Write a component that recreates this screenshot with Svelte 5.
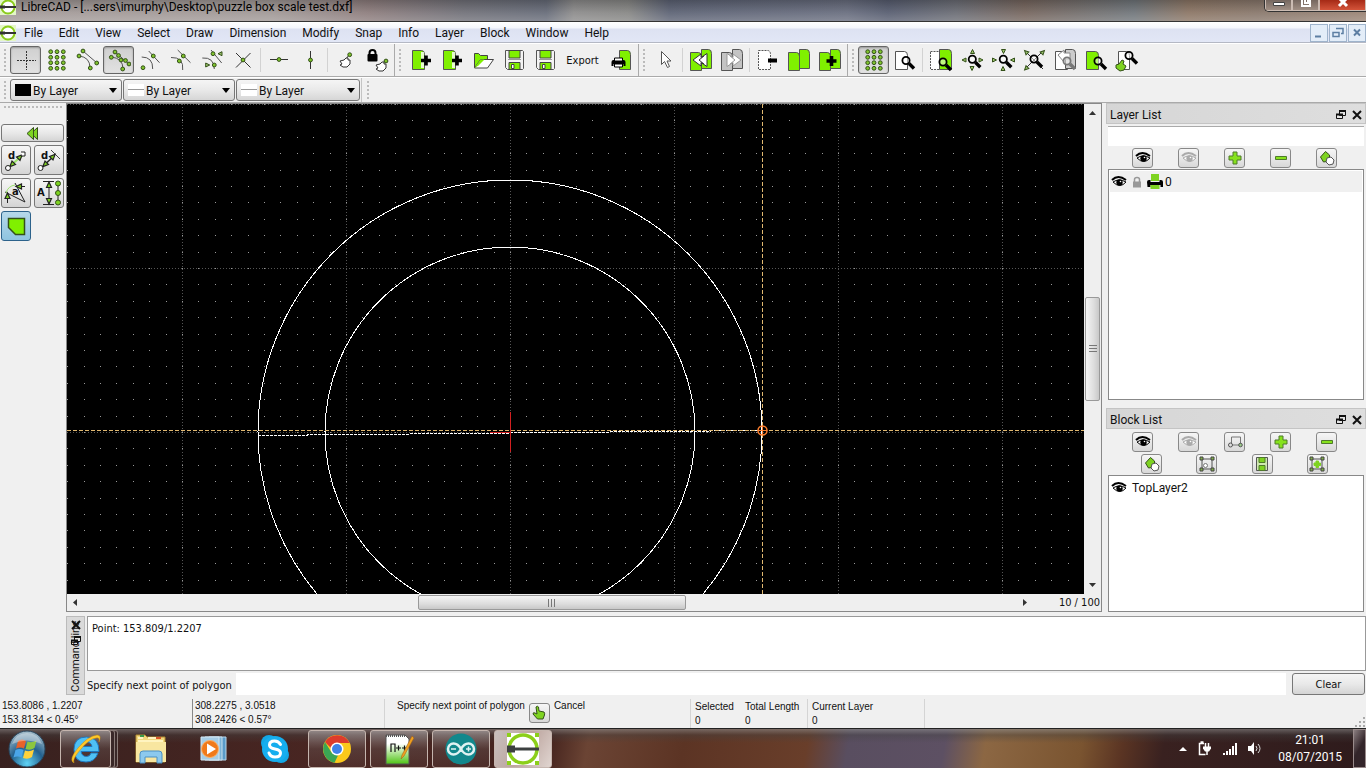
<script>
  const G = "#7ed321";
  const E = "#34501a";

  const node = (x, y) =>
    `<circle cx="${x}" cy="${y}" r="1.9" fill="#7fc42c" stroke="${E}" stroke-width="1"/>`;
  const line = (d, color = "#555", extra = "") =>
    `<path d="${d}" fill="none" stroke="${color}" ${extra}/>`;
  const tri = (x, y, turn) =>
    `<path d="M-2 2L0 -2L2 2Z" transform="translate(${x} ${y}) rotate(${turn})" fill="#9bc46a" stroke="${E}" stroke-width="1"/>`;
  const arrow = (x, y, turn) =>
    `<path d="M-2.500 2.500L0 -3L2.500 2.500Z" transform="translate(${x} ${y}) rotate(${turn})" fill="${G}" stroke="#222" stroke-width="1.200"/>`;
  const page = (x, y, w, h, fill = "#80f000", extra = "") =>
    `<path d="M${x} ${y}h${w - 3}q3 0 3 4v${h - 4}h-${w}z" fill="${fill}" stroke="#555" stroke-width="1" ${extra}/>`;
  const lens = (x, y, c = "#000") =>
    `<path d="M${x + 3} ${y + 3}l5 5" stroke="${c}" stroke-width="3.4"/><circle cx="${x}" cy="${y}" r="3.6" fill="#fff" fill-opacity=".5" stroke="${c}" stroke-width="1.8"/>`;
  const plus = (x, y) =>
    `<path d="M${x - 5} ${y}h10M${x} ${y - 5}v10" stroke="#000" stroke-width="3.6"/>`;
  const hand = (x, y, fill = "#fff") =>
    `<path d="M-5 -1l4-1l2-2l2 0l0 2l2 0l0 4l-3 3h-4l-3-2l2-1z" transform="translate(${x} ${y})" fill="${fill}" stroke="#333" stroke-width="1"/>`;
  const disk = `<path d="M3.500 2.500h17l1 1v17l-1 1h-15l-2-2z" fill="#f4f4f4" stroke="#555"/><path d="M7 2.500h11v7.500h-11z" fill="#80f000" stroke="#444"/><path d="M7 14.500h11v7h-11z" fill="#80f000" stroke="#444"/><path d="M9.500 16.500h2.500v4h-2.500z" fill="#fff" stroke="#444"/><path d="M6 11.500h13" stroke="#999"/>`;
  const printer = (x, y) =>
    `<path d="M${x - 7} ${y - 1}q0-2 2-2h10q2 0 2 2v4h-2v-2h-10v2h-2z" fill="#000"/><path d="M${x - 4} ${y - 5}h8v3h-8zM${x - 4} ${y + 1}h8v3h-8z" fill="#fff" stroke="#000"/>`;
  const dots = [5.7, 12, 18.3]
    .flatMap((x) => [3.7, 9.3, 14.7, 20.3].map((y) => node(x, y)))
    .join("");
  const both = (a, b) => page(1.5, 4.5, 11, 18, a) + page(12.5, 1.5, 10, 19, b);
  const eye = (c) =>
    `<path d="M1 6q6-6 14 0" fill="none" stroke="${c}" stroke-width="2"/><path d="M2 8q6-4 13 0q-6 7-13 0z" fill="#fff" stroke="${c}"/><circle cx="8.500" cy="8.500" r="3.200" fill="${c}"/><circle cx="9.500" cy="7.500" r=".8" fill="#fff"/>`;
  const frame = `<path d="M3 3h10v10h-10z" fill="none" stroke="#555"/><path d="M1 1h3v3h-3zM12 1h3v3h-3zM1 12h3v3h-3zM12 12h3v3h-3z" fill="#7fae45" stroke="#444"/>`;

  const icons = {
    free: line("M3 12.500h19M12.500 3v19", "#333", 'stroke-dasharray="2 1"'),
    grid: dots,
    endpoints: line("M7 3L21 15M3 8Q14 9 14 20") + node(7, 3) + node(3, 8) + node(20.7, 15) + node(14.3, 20),
    entity:
      line("M8 4L22 16M4 9Q16 10 16 21") +
      [[8, 4], [4.3, 9.3], [11.5, 7.5], [14, 12], [18.5, 12.5], [22, 16], [15.7, 21]].map((p) => node(...p)).join(""),
    center: line("M10.700 3L21.500 14.700M3.700 9Q15 9 14.700 21") + node(15.3, 8) + node(5, 19.7),
    middle: line("M8.700 2L21.500 14.700M2 9.500Q15 9 13.700 22") + node(14.3, 8) + node(10.3, 13),
    distance: line("M11 2L21.700 15M2.300 10Q14 9 14.300 21") + node(13, 5.7) + node(14.3, 17) + tri(20, 5.7, -90) + tri(7.7, 17, 90),
    intersect: line("M5 5L19.500 19.500M19.500 5L5 19.500", "#333") + node(12, 12),
    horizontal: line("M3 11.500h18", "#333") + node(12, 11.5),
    vertical: line("M12.500 3v18", "#333") + node(12.5, 12),
    relzero: line("M12 11l3-4", "#333") + hand(11, 14) + node(15.7, 6.7),
    lockzero: `<path d="M4.500 7v-2q0-3 3-3t3 3v2" fill="none" stroke="#000" stroke-width="2"/><rect x="2.500" y="6" width="10" height="7.500" rx="1"/>` + line("M17 16l3-3", "#333") + hand(16, 18) + node(21, 13),
    create: page(3.5, 2.5, 12, 19) + `<path d="M12 4h3v16h-3z" fill="#fff" opacity=".8"/>` + plus(17, 12.5),
    open: `<path d="M3.500 20v-14.500h4l2 2h7v4h-6z" fill="#80f000" stroke="#444"/><path d="M3.500 20l6-8.500h13l-6 8.500z" fill="#fff" stroke="#444"/><path d="M3.500 20l6-8.500h4l-6 6z" fill="#80f000" stroke="none"/>`,
    save: disk,
    print: page(10.5, 2.5, 11, 19) + printer(9.5, 15),
    select: `<path d="M8.500 3.500v13l3-3l3 6l2-1l-2.500-5.500h4z" fill="#fff" stroke="#555"/>`,
    undo: both("#80f000", "#80f000") + `<path d="M4 12l8-6v3.500l6-4v13l-6-4v3.500z" fill="#fff" stroke="#333"/><path d="M10 12l5-4M10 12l5 4" stroke="#333"/>`,
    redo: both("#c4c4c4", "#c4c4c4") + `<path d="M21 12l-8-6v3.500l-6-4v13l6-4v3.500z" fill="#fff" stroke="#999"/><path d="M15 12l-5-4M15 12l-5 4" stroke="#999"/>`,
    cut: page(2.5, 2.5, 12, 19, "#fff", 'stroke-dasharray="2 1"') + `<path d="M12 12.500h9" stroke="#000" stroke-width="4"/>`,
    copy: both("#80f000", "#80f000"),
    paste: both("#80f000", "#80f000") + plus(13.5, 13),
    preview: page(2.5, 3.5, 12, 18, "#fff") + lens(13, 12.5),
    redraw: page(1.5, 3.5, 11, 18, "#fff", 'stroke-dasharray="2 1"') + page(10.5, 1.5, 12, 20) + lens(14, 14),
    zoomin: tri(12.5, 3.5, 0) + tri(4, 12, -90) + tri(21, 12, 90) + tri(12, 20.5, 180) + lens(12.3, 11.3),
    zoomout: tri(12.5, 3.5, 180) + tri(3.5, 12, 90) + tri(21.5, 12, -90) + tri(12, 20.5, 0) + lens(12.3, 11.3),
    zoomauto: line("M3 3L21 21M21 3L3 21", "#333") + tri(4, 4, -45) + tri(21, 4, 45) + tri(4, 20.5, -135) + lens(12, 11),
    zoomprev: page(2.5, 3.5, 12, 18, "#fff") + page(12.5, 1.5, 10, 19, "#ccc") + `<path d="M5 7l6-5v3h6v6h-6v3z" fill="#fff" stroke="#888"/>` + lens(14, 13, "#777"),
    zoomwin: page(2.5, 3.5, 12, 18) + lens(14, 13),
    zoompan: page(3.5, 3.5, 11, 18, "#fff") + lens(14, 7.5) + `<path d="M1 17l3-1l3-4l2 1l-1 3l3 2l-2 4l-4 1l-4-3z" fill="${G}" stroke="${E}"/>`,

    back: `<path d="M12.500 1.500v12l-6.500-6z" fill="${G}" stroke="${E}"/><path d="M8.500 1.500v12l-6.500-6z" fill="${G}" stroke="${E}"/>`,
    dimpoint: line("M6 20L21 7", "#9be36a", 'stroke-width="2"') + arrow(9, 17.5, -135) + arrow(17, 10, 45) + `<circle cx="5" cy="21" r="2.500" fill="#fff" stroke="#222"/><path d="M18 5h4v4h-3" fill="#fff" stroke="#222"/>`,
    dimline: line("M5 21L18 9", "#222", 'stroke-width="1.500"') + line("M15 3L24 12", "#444") + arrow(9, 17.5, -135) + arrow(17, 9.5, 45) + `<circle cx="4.500" cy="21" r="2.500" fill="#fff" stroke="#222"/>`,
    dimangle: line("M2 12L22 22L12 3M4.500 23v-8M14 6.500h8", "#222") + line("M3 13Q5 6 12 5", "#9be36a") + arrow(4.5, 16, 0) + arrow(16, 6.5, -90),
    dimarea: line("M7 1.500h11M7 24.500h11M13 3v20M22 3v20", "#222") + arrow(13, 5, 0) + arrow(13, 21, 180) + `<g fill="${G}" stroke="${E}"><circle cx="22" cy="3.500" r="2.500"/><circle cx="22" cy="13" r="2.500"/><circle cx="22" cy="22.500" r="2.500"/></g>`,
    polygon: `<path d="M5.500 5.500h16v16h-9l-7-7z" fill="#80f000" stroke="${E}" stroke-width="1.500"/>`,

    eye: eye("#000"),
    eyeoff: eye("#aaa"),
    add: `<path d="M6 2h4v4h4v4h-4v4h-4v-4h-4v-4h4z" fill="#86e21c" stroke="#4f7a2a"/>`,
    remove: `<path d="M2.500 6.500h11v3h-11z" fill="#86e21c" stroke="#4f7a2a"/>`,
    edit: `<path d="M1.500 7l5-5.500l4 3.500v6l-6 1z" fill="${G}" stroke="${E}"/><path d="M8 8l4-1l3 3l-1 4l-4 1l-3-3z" fill="#fff" stroke="#555"/>`,
    attrs: `<path d="M4.500 10v-7h9v7M5 11h8" fill="none" stroke="#777"/><circle cx="3.500" cy="11" r="2" fill="#ddd" stroke="#555"/><circle cx="13.500" cy="11" r="1.800" fill="#9c8" stroke="#555"/>`,
    frame: frame + `<circle cx="6.500" cy="9.500" r="2" fill="#fff" stroke="#777"/>`,
    insert: frame + `<path d="M7 5h2.500v2h2v2.500h-2v2h-2.500v-2h-2v-2.500h2z" fill="${G}" stroke="${G}"/>`,
    smallsave: `<path d="M2.500 1.500h11v13h-11z" fill="#cfe8b0" stroke="#555"/><path d="M5 1.500h6v5h-6zM5 9.500h6v5h-6z" fill="${G}" stroke="#4f7a2a"/>`,
    lock: `<path d="M5.500 8v-2.500q0-2 2.500-2t2.500 2v2.500" fill="none" stroke="#999" stroke-width="1.500"/><path d="M4 7.500h8v6h-8z" fill="#999"/>`,
    printlayer: `<path d="M4 0h8v7h-8z" fill="${G}"/><path d="M0 8q0-2 2-2h1.500v2h9v-2h1.500q2 0 2 2v5h-2.500v-2h-10v2h-3z" fill="#000"/><path d="M3.500 11h9v4h-9z" fill="${G}"/>`,
    pointer: `<path d="M5 2q1.500-1.500 2.500 0l.5 4l5 1q1 1 .5 3l-1.500 4h-5.500l-4.500-5q0-2 2-1l2 1z" fill="${G}" stroke="${E}"/>`,
    float: `<path d="M6.500 4.500h6v4h-6zM3.500 7.500h6v4h-6z" fill="#e4e4e4" stroke="#111"/><path d="M6 4h7M3 7.500h7" stroke="#111" stroke-width="2"/>`,
    close: `<path d="M4 4l8 8M12 4l-8 8" stroke="#111" stroke-width="2"/>`,
    minimize: `<path d="M4 11.500h6" stroke="#5d7fa3" stroke-width="2"/>`,
    restore: `<path d="M6 3.500h7v5h-2M3 7.500h6v4h-6z" fill="none" stroke="#5d7fa3" stroke-width="1.500"/>`,
    closedoc: `<path d="M5 4.500l6 6M11 4.500l-6 6" stroke="#5d7fa3" stroke-width="2"/>`,
    app: `<path d="M0 0h16v16h-16z" fill="#e4f6c8"/><circle cx="8" cy="8" r="6.500" fill="#fff" stroke="#8bcb1c" stroke-width="2"/><path d="M0 8h16" stroke="#333" stroke-width="2"/><path d="M0 6.500h5v3h-5z" fill="#333"/>`,
  };

  const menus = ["File", "Edit", "View", "Select", "Draw", "Dimension", "Modify", "Snap", "Info", "Layer", "Block", "Window", "Help"];

  const toolbars = [
    ["free", "grid", "endpoints", "entity", "center", "middle", "distance", "intersect", "|", "horizontal", "vertical", "|", "relzero", "lockzero"],
    ["create", "create", "open", "save", "save", "Export", "print"],
    ["select", "|", "undo", "redo", "|", "cut", "copy", "paste"],
    ["grid", "preview", "|", "redraw", "zoomin", "zoomout", "zoomauto", "zoomprev", "zoomwin", "zoompan"],
  ];
  const pressed = ["0-free", "0-entity", "3-grid"];

  const blockTools = [
    ["eye", "eyeoff", "attrs", "add", "remove"],
    ["edit", "frame", "smallsave", "insert"],
  ];

  // drawing origin and grid pitch in view pixels
  const ox = 443;
  const oy = 328;
  const step = 16.4;

  let points = "";
  for (let i = -60; i <= 120; i++) {
    for (let j = -40; j <= 60; j++) {
      const x = Math.round(ox + i * step);
      const y = Math.round(oy + j * step);
      if (x >= 0 && y >= 0) points += `M${x} ${y}h1`;
    }
  }
  const metaX = Array.from({ length: 14 }, (_, i) => ox + (i - 2) * 164);
  const metaY = Array.from({ length: 8 }, (_, i) => oy + (i - 2) * 164);

  let filter = "";
  let command = "";
</script>

{#snippet icon(name, size)}
  <svg class="icon" width={size} height={size} viewBox="0 0 {size} {size}" aria-hidden="true">
    {@html icons[name]}
  </svg>
{/snippet}

<div class="desktop">
  <header class="titlebar">
    {@render icon("app", 16)}
    <h1>LibreCAD - [...sers\imurphy\Desktop\puzzle box scale test.dxf]</h1>
    <div class="window-buttons">
      <button aria-label="Minimize"><svg width="14" height="8"><path d="M1.500 2.500h11v3h-11z" fill="#fff" stroke="#444" /></svg></button>
      <button aria-label="Maximize"><svg width="14" height="8"><path d="M3 -3h8v9h-8zM6 0v3h3v-3" fill="none" stroke="#fff" stroke-width="2" /></svg></button>
      <button class="red" aria-label="Close"><svg width="14" height="8"><path d="M3 -2l8 8M11 -2l-8 8" stroke="#fff" stroke-width="3" /></svg></button>
    </div>
  </header>

  <nav class="menubar">
    {@render icon("app", 16)}
    {#each menus as menu}
      <button>{menu}</button>
    {/each}
    <div class="doc-buttons">
      {#each ["minimize", "restore", "closedoc"] as name}
        <button aria-label={name}>{@render icon(name, 16)}</button>
      {/each}
    </div>
  </nav>

  <div class="toolrow main-tools">
    {#each toolbars as tools, t}
      <div class="toolbar" role="toolbar">
        <span class="handle"></span>
        {#each tools as tool}
          {#if tool === "|"}
            <span class="separator"></span>
          {:else if tool === "Export"}
            <button class="text">Export</button>
          {:else}
            <button class:pressed={pressed.includes(`${t}-${tool}`)} aria-label={tool}>{@render icon(tool, 24)}</button>
          {/if}
        {/each}
      </div>
    {/each}
  </div>

  <div class="toolrow pens">
    <span class="handle"></span>
    {#each ["color", "width", "type"] as kind}
      <div class="pen {kind}">
        <span class="swatch"></span>
        <select aria-label="Pen {kind}"><option>By Layer</option></select>
        <svg width="8" height="5" aria-hidden="true"><path d="M0 0h8l-4 5z" /></svg>
      </div>
    {/each}
    <span class="edge"></span>
    <span class="handle"></span>
  </div>

  <div class="workspace">
    <aside class="cad-tools">
      <span class="grip"></span>
      <button class="wide" aria-label="Back">{@render icon("back", 15)}</button>
      <button aria-label="Distance point to point">{@render icon("dimpoint", 26)}<b>d</b></button>
      <button aria-label="Distance entity to point">{@render icon("dimline", 26)}<b>d</b></button>
      <button aria-label="Angle between lines">{@render icon("dimangle", 26)}<b class="angle">a</b></button>
      <button aria-label="Total length">{@render icon("dimarea", 26)}<b class="area">A</b></button>
      <button class="active" aria-label="Polygonal area">{@render icon("polygon", 26)}</button>
    </aside>

    <div class="docks">
      <div class="upper">
        <main class="view">
          <div class="canvas">
            <svg width="100%" height="100%" shape-rendering="crispEdges">
              <path d={points} transform="translate(0 .5)" stroke="#999" />
              {#each metaX as x}
                <line x1={x + 0.5} y1="0" x2={x + 0.5} y2="100%" stroke="#555" stroke-dasharray="1 2" />
              {/each}
              {#each metaY as y}
                <line x1="0" y1={y + 0.5} x2="100%" y2={y + 0.5} stroke="#555" stroke-dasharray="1 2" />
              {/each}
              <g fill="none" stroke="#fff">
                <circle cx={ox} cy={oy} r="252" />
                <circle cx={ox} cy={oy} r="185" />
                <path d="M191 331.500L695 326.500" stroke-dasharray="3 1" />
              </g>
              <path d="M423 328.500h21M443.500 308v40" stroke="#d22020" />
              <g stroke="#e0b870" stroke-dasharray="4 2">
                <line x1="0" y1="326.500" x2="4000" y2="326.500" />
                <line x1="695.500" y1="0" x2="695.500" y2="2000" />
              </g>
              <g fill="none" stroke="#ff8030" shape-rendering="auto">
                <circle cx="695.500" cy="326.500" r="4.500" stroke-width="1.500" />
                <path d="M691 326.500h9M695.500 322v9" />
              </g>
            </svg>
          </div>
          <div class="vbar">
            <svg width="7" height="4"><path d="M0 4h7l-3.500-4z" fill="#333" /></svg>
            <div class="thumb"><span></span></div>
            <svg width="7" height="4"><path d="M0 0h7l-3.500 4z" fill="#333" /></svg>
          </div>
          <div class="hbar">
            <svg width="4" height="7"><path d="M4 0v7l-4-3.500z" fill="#333" /></svg>
            <div class="thumb"><span></span></div>
            <svg width="4" height="7"><path d="M0 0v7l4-3.500z" fill="#333" /></svg>
            <span class="scale">10 / 100</span>
          </div>
        </main>

        <aside class="lists">
          <section class="layers">
            <h2>Layer List {@render icon("float", 16)}{@render icon("close", 16)}</h2>
            <input type="text" aria-label="Filter layers" bind:value={filter} />
            <div class="buttons">
              {#each ["eye", "eyeoff", "add", "remove", "edit"] as name}
                <button aria-label={name}>{@render icon(name, 16)}</button>
              {/each}
            </div>
            <ul>
              <li class="current">
                {@render icon("eye", 16)}{@render icon("lock", 16)}{@render icon("printlayer", 16)}<span>0</span>
              </li>
            </ul>
          </section>
          <section class="blocks">
            <h2>Block List {@render icon("float", 16)}{@render icon("close", 16)}</h2>
            {#each blockTools as row}
              <div class="buttons">
                {#each row as name}
                  <button aria-label={name}>{@render icon(name, 16)}</button>
                {/each}
              </div>
            {/each}
            <ul>
              <li>{@render icon("eye", 16)}<span class="name">TopLayer2</span></li>
            </ul>
          </section>
        </aside>
      </div>

      <section class="command">
        <div class="command-title">
          {@render icon("close", 16)}
          {@render icon("float", 16)}
          <h2>Command line</h2>
        </div>
        <div class="command-body">
          <textarea readonly aria-label="Command history">Point: 153.809/1.2207</textarea>
          <div class="prompt">
            <label for="command">Specify next point of polygon</label>
            <input id="command" type="text" bind:value={command} />
            <button>Clear</button>
          </div>
        </div>
      </section>
    </div>
  </div>

  <footer class="status">
    <div class="coords">153.8086 , 1.2207<br />153.8134 &lt; 0.45°</div>
    <div class="coords line">308.2275 , 3.0518<br />308.2426 &lt; 0.57°</div>
    <div class="mouse">
      <span>Specify next point of polygon</span>
      <button aria-label="Mouse hint">{@render icon("pointer", 16)}</button>
      <span>Cancel</span>
    </div>
    <div class="counts">
      <span>Selected<br />0</span>
      <span>Total Length<br />0</span>
    </div>
    <div class="layer">Current Layer<br />0</div>
    <svg class="corner" width="10" height="10"><path d="M8 1h2M8 5h2M8 9h2M4 5h2M4 9h2M0 9h2" stroke="#aaa" stroke-width="2" /></svg>
  </footer>

  <div class="taskbar">
    <button class="start" aria-label="Start">
      <svg width="38" height="38" viewBox="0 0 38 38">
        <defs>
          <radialGradient id="orb" cy=".9" r=".9">
            <stop offset="0" stop-color="#5fd3f5" />
            <stop offset=".5" stop-color="#23618f" />
            <stop offset="1" stop-color="#a9c0cc" />
          </radialGradient>
        </defs>
        <circle cx="19" cy="19" r="18" fill="url(#orb)" stroke="#27455c" />
        <path d="M10 11q4-3 8 0l-2 7.500q-4-2-8 0z" fill="#e8622a" />
        <path d="M19.500 11.500q4 2 9-1l-2 7.500q-4 3-9 1z" fill="#8cc63e" />
        <path d="M7.500 20q4-2 8 0l-2 7.500q-4-2-8 0z" fill="#4aa5e8" />
        <path d="M17 20.500q4 2 9-1l-2 7.500q-4 3-9 1z" fill="#ffd23a" />
        <path d="M4 14q4-11 15-11t15 11q-15-7-30 0z" fill="#fff" opacity=".35" />
      </svg>
    </button>
    <button class="task open stacked" aria-label="Internet Explorer">
      <svg width="32" height="32" viewBox="0 0 32 32">
        <path d="M28 20q-3 9-12 9q-12 0-12-12.500q0-12.500 12.500-12.500q12.500 0 12.500 14.500h-18q1 5 5.500 5q3.500 0 4.500-3.500zM11 13.500h11q-1-4.500-5.500-4.500t-5.500 4.500z" fill="#4fc1f4" stroke="#1e78c0" />
        <path d="M4 30q-6-3 4-15q10-12 19-13q5 0 2 7q1-5-3-4q-7 1-15 11q-9 10-7 14z" fill="#ffc928" stroke="#c98a10" stroke-width=".5" />
      </svg>
    </button>
    <button class="task" aria-label="Explorer">
      <svg width="34" height="32" viewBox="0 0 34 32">
        <path d="M2 29v-27h9l2 2h18v25z" fill="#f1d77c" stroke="#b08a30" />
        <path d="M4 8h25M4 5h5M14 5h12" stroke="#fff4c0" stroke-width="2" />
        <path d="M6 3h4" stroke="#3a9b4a" stroke-width="2" /><path d="M22 5h5" stroke="#d8562a" stroke-width="2" />
        <path d="M2 9h30v20h-30z" fill="#f8e6a0" />
        <path d="M6 30v-9q0-3 3-3h16q3 0 3 3v9h-5v-6h-12v6z" fill="#8cc9ee" stroke="#4b90c4" />
      </svg>
    </button>
    <button class="task" aria-label="Media Player">
      <svg width="28" height="28" viewBox="0 0 28 28">
        <path d="M10 2h17v23h-17z" fill="#5a9bc9" stroke="#b9d6ea" /><path d="M6 2h17v23h-17z" fill="#7db4d8" stroke="#c9e0ee" /><path d="M2 2h18v23h-18z" fill="#a5cde6" stroke="#d5e8f4" />
        <circle cx="11" cy="14" r="8.500" fill="#f07a1a" stroke="#fbb26a" /><path d="M8 8.500l9 5.500l-9 5.500z" fill="#fff" />
      </svg>
    </button>
    <button class="task" aria-label="Skype">
      <svg width="32" height="32" viewBox="0 0 32 32">
        <circle cx="10" cy="10" r="8" fill="#13a8e6" /><circle cx="22" cy="22" r="8" fill="#13a8e6" /><circle cx="16" cy="16" r="13" fill="#16aeee" />
        <path d="M21.500 11.500q-2-3.500-6-3.500q-5 0-5 4q0 3 5.500 4t5.500 4q0 4-5.500 4q-4.500 0-6-4" fill="none" stroke="#fff" stroke-width="3" stroke-linecap="round" />
      </svg>
    </button>
    <button class="task open" aria-label="Chrome">
      <svg width="30" height="30" viewBox="0 0 30 30">
        <circle cx="15" cy="15" r="14" fill="#fbc91b" />
        <path d="M3 8a14 14 0 0 1 24.500 1h-12.500l-6 5z" fill="#dd3b2c" />
        <path d="M3 8l6.500 10.500l6.500 3l-3.500 7.200a14 14 0 0 1-9.500-20.700z" fill="#3aa654" />
        <circle cx="15" cy="15" r="6.500" fill="#fff" /><circle cx="15" cy="15" r="5" fill="#3f82e8" />
      </svg>
    </button>
    <button class="task open" aria-label="Notepad++">
      <svg width="32" height="32" viewBox="0 0 32 32">
        <defs>
          <linearGradient id="note" x2="0" y2="1">
            <stop offset=".3" stop-color="#fff" />
            <stop offset="1" stop-color="#4fc414" />
          </linearGradient>
        </defs>
        <path d="M3 2h19l4 4v25h-23z" fill="url(#note)" stroke="#555" />
        <path d="M3 3h19" stroke="#555" stroke-width="2" stroke-dasharray="1 1" />
        <path d="M8 19v-8h4v8M13 15h5M15.500 12.500v5M19 15h5M21.500 12.500v5" fill="none" stroke="#111" stroke-width="1.200" />
        <path d="M29 3l-10 19l-1 4l3-3l10-18z" fill="#f0a020" stroke="#9a5b14" stroke-width=".5" />
      </svg>
    </button>
    <button class="task open" aria-label="Arduino">
      <svg width="32" height="32" viewBox="0 0 32 32">
        <circle cx="16" cy="16" r="15.500" fill="#12888c" />
        <path d="M16 16q-3-5.500-7.500-5.500a5.500 5.500 0 0 0 0 11q4.500 0 7.500-5.500q3-5.500 7.500-5.500a5.500 5.500 0 0 1 0 11q-4.500 0-7.500-5.500z" fill="none" stroke="#dff2f2" stroke-width="2.500" />
        <path d="M6 16h5M21 16h5M23.500 13.500v5" stroke="#dff2f2" stroke-width="1.500" />
      </svg>
    </button>
    <button class="task open current" aria-label="LibreCAD">
      <svg width="32" height="32" viewBox="0 0 32 32">
        <path d="M0 0h32v32h-32z" fill="#fff" />
        <path d="M0 0h4v4h-4zM28 0h4v4h-4zM0 28h4v4h-4zM28 28h4v4h-4z" fill="#8ccf1a" />
        <circle cx="16" cy="16" r="14" fill="none" stroke="#8ccf1a" stroke-width="3.500" />
        <path d="M0 16h32" stroke="#3c4040" stroke-width="3" /><path d="M0 12.500h8v7h-8z" fill="#3c4040" />
      </svg>
    </button>

    <div class="tray">
      <svg width="8" height="4"><path d="M0 4h8l-4-4z" fill="#fff" /></svg>
      <svg width="14" height="15"><path d="M6 2.500h-4.500v11h6M2.500 1h3" fill="none" stroke="#fff" stroke-width="1.500" /><path d="M5 5.500h8v2l-2 3h-4l-2-3z" fill="#fff" /><path d="M7.500 2v4M10.500 2v4M9 10v4" stroke="#fff" stroke-width="1.500" /></svg>
      <svg width="14" height="12"><path d="M1 12v-2M4 12v-4M7 12v-6M10 12v-9M13 12v-12" stroke="#fff" stroke-width="2" /></svg>
      <svg width="14" height="13"><path d="M0 4h3l3-4v13l-3-4h-3z" fill="#fff" /><path d="M8 4q2 2.500 0 5M10 2q4 4.500 0 9" fill="none" stroke="#ddd" /></svg>
      <time>21:01<br />08/07/2015</time>
      <button class="peek" aria-label="Show desktop"></button>
    </div>
  </div>
</div>

<style>
  :global(body) {
    margin: 0;
    overflow: hidden;
  }

  * {
    box-sizing: border-box;
  }

  button,
  input,
  select,
  textarea {
    font: inherit;
    color: inherit;
    margin: 0;
    padding: 0;
    border: 0;
    background: none;
  }

  h1,
  h2 {
    margin: 0;
    font-size: 12px;
    font-weight: normal;
  }

  svg {
    display: block;
    flex: none;
  }

  .desktop {
    display: flex;
    flex-direction: column;
    height: 100vh;
    background: #f0f0f0;
    color: #111;
    font: 12px/16px Roboto, "Open Sans", sans-serif;
  }

  .titlebar {
    display: flex;
    height: 22px;
    flex: none;
    border-bottom: 1px solid #333;
    background:
      linear-gradient(#0003, #fff1 60%, #fff3),
      linear-gradient(90deg, #a39a98 0, #a09896 20%, #8c7c7c 27%, #707078 34%, #666b78 40%, #8c8b8b 42%, #868684 46%, #5c6274 49%, #686d7e 62%, #575d70 65%, #6a6c74 70%, #75655d 75%, #6f757a 83%, #8b7564 87%, #88776b 92%, #9a8374 100%);
  }

  .titlebar .icon {
    margin-top: -1px;
  }

  .titlebar h1 {
    padding-left: 5px;
    line-height: 14px;
    color: #000;
  }

  .window-buttons {
    display: flex;
    height: 12px;
    margin-left: auto;
    border: 1px solid #333;
    border-width: 0 0 1px 1px;
    border-radius: 0 0 0 5px;
    overflow: hidden;
  }

  .window-buttons button {
    display: flex;
    justify-content: center;
    width: 27px;
    border: 1px solid #cbbcb3;
    border-top: 0;
    background: linear-gradient(#75675f, #a08f84);
  }

  .window-buttons .red {
    width: 47px;
    background: linear-gradient(#a52a16, #d4543a);
  }

  .menubar {
    display: flex;
    align-items: center;
    height: 21px;
    flex: none;
    gap: 16px;
    padding-top: 2px;
    border-bottom: 1px solid #b4b8c4;
    background: linear-gradient(#fff 0, #f4f6fc 30%, #dde2f2 35%, #e2e7f6 100%);
  }

  .menubar > .icon {
    margin-right: -8px;
  }

  .doc-buttons {
    display: flex;
    gap: 1px;
    margin-left: auto;
  }

  .doc-buttons button {
    width: 18px;
    height: 18px;
    border: 1px solid #9fb4cc;
    background: #e3edf8;
  }

  .toolrow {
    display: flex;
    flex: none;
    border-bottom: 1px solid #aaa;
    border-top: 1px solid #fff;
  }

  .main-tools {
    height: 34px;
  }

  .toolbar {
    display: flex;
    align-items: center;
    padding-right: 2px;
    border-right: 1px solid #aaa;
  }

  .toolbar:last-child {
    border: 0;
  }

  .toolbar button {
    display: flex;
    align-items: center;
    justify-content: center;
    width: 31px;
    height: 28px;
    border-radius: 3px;
  }

  .toolbar .text {
    width: 45px;
    font: 11px "DejaVu Sans Condensed", sans-serif;
  }

  .toolbar .pressed {
    border: 1px solid #666;
    background: linear-gradient(#cfcfcf, #e2e2e2);
    box-shadow: inset 0 1px 2px #999;
  }

  .handle {
    width: 4px;
    height: 24px;
    margin: 0 3px;
    background: radial-gradient(circle, #bbb 1px, transparent 1px) 0 0 / 4px 4px;
  }

  .separator {
    width: 1px;
    height: 24px;
    margin: 0 2px;
    background: #d2d2d2;
  }

  .pens {
    align-items: center;
    height: 26px;
    gap: 1px;
  }

  .pens .handle {
    height: 20px;
    margin: 0 2px 0 3px;
  }

  .edge {
    align-self: stretch;
    width: 1px;
    background: #c4c4c4;
  }

  .pen {
    display: flex;
    align-items: center;
    width: 112px;
    height: 22px;
    padding: 0 4px;
    border: 1px solid #777;
    border-radius: 3px;
    background: linear-gradient(#f5f5f5, #e9e9e9 50%, #d6d6d6);
  }

  .type {
    width: 124px;
  }

  .swatch {
    width: 16px;
    height: 12px;
    margin-right: 2px;
    background: linear-gradient(#fff 5px, #999 5px, #999 6px, #fff 6px);
  }

  .color .swatch {
    background: #000;
  }

  .pen select {
    flex: 1;
    min-width: 0;
    padding-top: 1px;
    appearance: none;
  }

  .workspace {
    display: flex;
    flex: 1;
    min-height: 0;
  }

  .cad-tools {
    display: grid;
    grid-template-columns: 30px 30px;
    grid-auto-rows: 30px;
    grid-template-rows: 18px 18px;
    gap: 3px;
    width: 66px;
    padding: 0 1px;
    flex: none;
  }

  .grip {
    grid-column: span 2;
    height: 4px;
    margin: 2px 2px 0;
    background: radial-gradient(circle, #bbb 1px, transparent 1px) 0 0 / 4px 4px;
  }

  .cad-tools button {
    display: flex;
    align-items: center;
    justify-content: center;
    position: relative;
    border: 1px solid #777;
    border-radius: 3px;
    background: linear-gradient(#f6f6f6, #e8e8e8 50%, #d4d4d4);
  }

  .cad-tools .wide {
    grid-column: span 2;
  }

  .cad-tools .active {
    border-color: #2c628b;
    background: linear-gradient(#b6d8ea, #8fc4e0);
  }

  .cad-tools b {
    position: absolute;
    left: 6px;
    top: 4px;
    font: bold 10px/12px "DejaVu Sans", sans-serif;
  }

  .cad-tools .angle {
    left: 10px;
    top: 7px;
  }

  .cad-tools .area {
    left: 2px;
    top: 8px;
  }

  .docks {
    display: flex;
    flex-direction: column;
    flex: 1;
    min-width: 0;
  }

  .upper {
    display: flex;
    flex: 1;
    gap: 4px;
    min-height: 0;
  }

  .view {
    display: grid;
    grid-template: minmax(0, 1fr) 17px / minmax(0, 1fr) 17px;
    flex: 1;
    min-width: 0;
    border: 1px solid #888;
  }

  .canvas {
    overflow: hidden;
    background: #000;
  }

  .vbar,
  .hbar {
    align-items: center;
    background: #efefef;
  }

  .vbar {
    display: flex;
    flex-direction: column;
    justify-content: space-between;
    padding: 7px 0;
  }

  .hbar {
    display: grid;
    grid-template-columns: 4px 1fr 4px 73px;
    grid-column: span 2;
    padding: 0 1px 0 6px;
  }

  .thumb {
    display: flex;
    align-items: center;
    justify-content: center;
    border: 1px solid #999;
    border-radius: 2px;
  }

  .vbar .thumb {
    width: 15px;
    height: 104px;
    background: linear-gradient(90deg, #f4f4f4, #ddd 60%, #c8c8c8);
  }

  .hbar .thumb {
    width: 268px;
    height: 15px;
    margin-left: 36%;
    background: linear-gradient(#f4f4f4, #ddd 60%, #c8c8c8);
  }

  .thumb span {
    width: 8px;
    height: 8px;
    background: repeating-linear-gradient(90deg, #777 0 1px, transparent 1px 3px);
  }

  .vbar .thumb span {
    background: repeating-linear-gradient(#777 0 1px, transparent 1px 3px);
  }

  .scale {
    text-align: right;
    font: 11px "DejaVu Sans Condensed", sans-serif;
  }

  .lists {
    display: flex;
    flex-direction: column;
    width: 260px;
    gap: 8px;
    flex: none;
  }

  .lists section {
    display: flex;
    flex-direction: column;
    padding-right: 2px;
  }

  .layers {
    flex: 297;
  }

  .blocks {
    flex: 204;
  }

  .lists h2 {
    display: flex;
    align-items: center;
    height: 21px;
    margin-right: -2px;
    padding: 2px 0 0 3px;
    border: 1px solid #c4c4c4;
    background: linear-gradient(90deg, #d6d6d6, #dedede);
  }

  .lists h2 .icon:first-of-type {
    margin-left: auto;
  }

  .lists input {
    height: 20px;
    margin: 2px 0 0 2px;
    padding: 0 4px;
    border-top: 1px solid #aaa;
    background: #fff;
  }

  .layers .buttons {
    margin: 1px 0 0;
  }

  .buttons {
    display: flex;
    justify-content: space-evenly;
    padding: 1px 2px 1px 1px;
  }

  .blocks .buttons:first-of-type {
    padding-top: 3px;
  }

  .buttons button,
  .mouse button {
    display: flex;
    align-items: center;
    justify-content: center;
    width: 21px;
    height: 20px;
    border: 1px solid #888;
    border-radius: 3px;
    background: linear-gradient(#f6f6f6, #e8e8e8 50%, #d8d8d8);
  }

  .lists ul {
    flex: 1;
    margin: 0 0 0 2px;
    padding: 1px;
    border: 1px solid #888;
    background: #fff;
    list-style: none;
  }

  .lists li {
    display: flex;
    align-items: center;
    height: 21px;
    padding-left: 1px;
  }

  .lists .current {
    gap: 2px;
    background: #f0f0f0;
  }

  .name {
    padding-left: 5px;
  }

  .command {
    display: flex;
    height: 79px;
    margin-top: 4px;
    flex: none;
  }

  .command-title {
    display: flex;
    flex-direction: column;
    align-items: center;
    width: 19px;
    border: 1px solid #bbb;
    background: #dadada;
  }

  .command-title h2 {
    margin-top: -28px;
    writing-mode: vertical-rl;
    transform: rotate(180deg);
    font-size: 11px;
    line-height: 16px;
    white-space: nowrap;
  }

  .command-body {
    display: flex;
    flex-direction: column;
    flex: 1;
    padding-left: 2px;
    font: 11px/16px "DejaVu Sans Condensed", sans-serif;
  }

  textarea {
    height: 55px;
    padding: 4px;
    resize: none;
    border: 1px solid #999;
    background: #fff;
  }

  .prompt {
    display: flex;
    align-items: center;
    flex: 1;
    gap: 4px;
    padding: 2px 1px 0 0;
  }

  .prompt label {
    padding-top: 3px;
  }

  .prompt input {
    flex: 1;
    height: 22px;
    margin-right: 2px;
    background: #fff;
  }

  .prompt button {
    width: 73px;
    height: 22px;
    padding-top: 2px;
    border: 1px solid #777;
    border-radius: 3px;
    background: linear-gradient(#f5f5f5, #e9e9e9 50%, #d4d4d4);
  }

  .status {
    display: flex;
    height: 33px;
    flex: none;
    padding-top: 4px;
    font: 10px/14px "Liberation Sans", sans-serif;
  }

  .coords {
    width: 192px;
    padding-left: 2px;
  }

  .line {
    border-left: 1px solid #888;
  }

  .mouse {
    display: flex;
    width: 306px;
    gap: 4px;
    padding-left: 12px;
    border-left: 1px solid #d4d4d4;
  }

  .mouse button {
    margin-top: 4px;
  }

  .counts {
    display: flex;
    width: 117px;
    gap: 11px;
    padding: 1px 0 0 4px;
    border-left: 1px solid #d4d4d4;
  }

  .layer {
    width: 118px;
    padding: 1px 0 0 4px;
    border: 1px solid #d4d4d4;
    border-width: 0 1px;
  }

  .corner {
    margin: 18px 1px 0 auto;
  }

  .taskbar {
    display: flex;
    align-items: center;
    height: 40px;
    flex: none;
    gap: 4px;
    padding-left: 8px;
    border-top: 1px solid #222;
    background:
      linear-gradient(#8a8a8a99 0, #4446 6px, transparent 14px),
      linear-gradient(100deg, #38211f 0, #4a2622 25%, #43221d 40%, #6b4434 43%, #5c3424 50%, #693e2a 59%, #594e60 62%, #5d5063 69%, #8c6743 72%, #7a5430 79%, #5a3423 82%, #392120 85%, #2e1b1c 100%);
  }

  .taskbar button {
    display: flex;
    align-items: center;
    justify-content: center;
  }

  .start {
    width: 38px;
    margin-right: 10px;
  }

  .task {
    width: 58px;
    height: 38px;
    border-radius: 3px;
  }

  .open {
    border: 1px solid #c5b5ae;
    background: linear-gradient(#a8a0a0aa, #6b595766 50%, #5d403c55);
  }

  .stacked {
    width: 51px;
    margin-right: 7px;
    box-shadow: 4px 0 0 -1px #3a2828, 4px 0 0 0 #8a7b77, 7px 0 0 -1px #3a2828, 7px 0 0 0 #8a7b77;
  }

  .taskbar .current {
    background: linear-gradient(120deg, #c8c0be, #bda6a0 50%, #e0d5d0);
  }

  .tray {
    display: flex;
    align-items: center;
    align-self: stretch;
    gap: 11px;
    margin-left: auto;
    color: #fff;
  }

  time {
    margin-left: 5px;
    text-align: center;
    line-height: 17px;
  }

  .peek {
    align-self: stretch;
    width: 13px;
    border: 1px solid #998b8b;
    background: linear-gradient(120deg, #8a7e80, #33252a 50%);
  }
</style>
